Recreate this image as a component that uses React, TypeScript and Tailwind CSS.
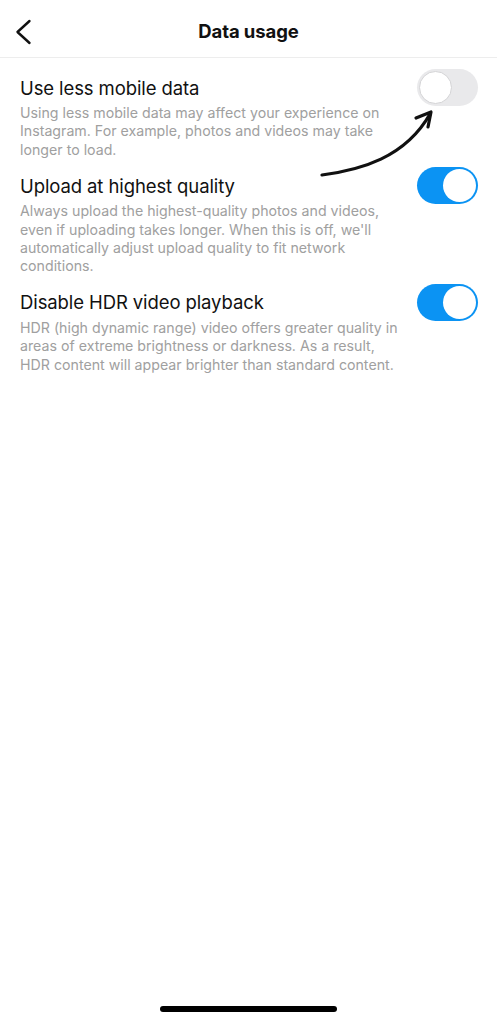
import React from "react";

type Setting = {
  title: string;
  lines: string[];
  on: boolean;
};

const settings: Setting[] = [
  {
    title: "Use less mobile data",
    lines: [
      "Using less mobile data may affect your experience on",
      "Instagram. For example, photos and videos may take",
      "longer to load.",
    ],
    on: false,
  },
  {
    title: "Upload at highest quality",
    lines: [
      "Always upload the highest-quality photos and videos,",
      "even if uploading takes longer. When this is off, we'll",
      "automatically adjust upload quality to fit network",
      "conditions.",
    ],
    on: true,
  },
  {
    title: "Disable HDR video playback",
    lines: [
      "HDR (high dynamic range) video offers greater quality in",
      "areas of extreme brightness or darkness. As a result,",
      "HDR content will appear brighter than standard content.",
    ],
    on: true,
  },
];

function Toggle({ on }: { on: boolean }) {
  return (
    <div
      className={
        on
          ? "flex h-[37px] w-[61px] shrink-0 items-center justify-end rounded-full bg-[#0b93f3] p-[2px]"
          : "flex h-[37px] w-[61px] shrink-0 items-center justify-start rounded-full bg-[#e9e9eb] p-[2px]"
      }
    >
      <div
        className={
          on
            ? "h-[33px] w-[33px] rounded-full bg-white"
            : "h-[33px] w-[33px] rounded-full border border-[#d4d4d6] bg-white"
        }
      />
    </div>
  );
}

export default function App() {
  return (
    <div
      className="relative flex h-[1022px] w-[497px] flex-col bg-white text-[#111]"
      style={{ fontFamily: "Inter, 'Noto Sans', sans-serif" }}
    >
      {/* top bar */}
      <div className="relative flex h-[58px] items-center justify-center border-b border-[#ededed]">
        <svg
          className="absolute left-[14px] top-[19px]"
          width="20"
          height="26"
          viewBox="0 0 20 26"
          fill="none"
        >
          <path
            d="M15.5 2 L3.5 13 L15.5 24"
            stroke="#111"
            strokeWidth="2.4"
            strokeLinecap="round"
            strokeLinejoin="round"
          />
        </svg>
        <span className="mt-[6px] text-[18.5px] font-bold tracking-[-0.1px]">Data usage</span>
      </div>

      {/* settings list */}
      <div className="flex flex-col gap-[8px] pl-[20px] pr-[19px] pt-[11px]">
        {settings.map((s) => (
          <div key={s.title} className="flex flex-col">
            <div className="flex h-[37px] items-center justify-between">
              <div className="text-[18.5px] leading-[26px] tracking-[-0.1px]">{s.title}</div>
              <Toggle on={s.on} />
            </div>
            <div className="-mt-[2px] text-[14.2px] leading-[18.4px] text-[#a0a0a0]">
              {s.lines.map((l) => (
                <div key={l} className="whitespace-nowrap">
                  {l}
                </div>
              ))}
            </div>
          </div>
        ))}
      </div>

      {/* hand-drawn arrow pointing at the first switch */}
      <svg
        className="pointer-events-none absolute left-0 top-0"
        width="497"
        height="200"
        viewBox="0 0 497 200"
        fill="none"
      >
        <path
          d="M322 175 C360 170 405 158 430 114"
          stroke="#111"
          strokeWidth="3.2"
          strokeLinecap="round"
        />
        <path
          d="M416 118 L431 112 L428 127"
          stroke="#111"
          strokeWidth="3.2"
          strokeLinecap="round"
          strokeLinejoin="round"
        />
      </svg>

      {/* home indicator */}
      <div className="mt-auto mb-[10px] flex justify-center">
        <div className="h-[6px] w-[177px] rounded-full bg-black" />
      </div>
    </div>
  );
}
